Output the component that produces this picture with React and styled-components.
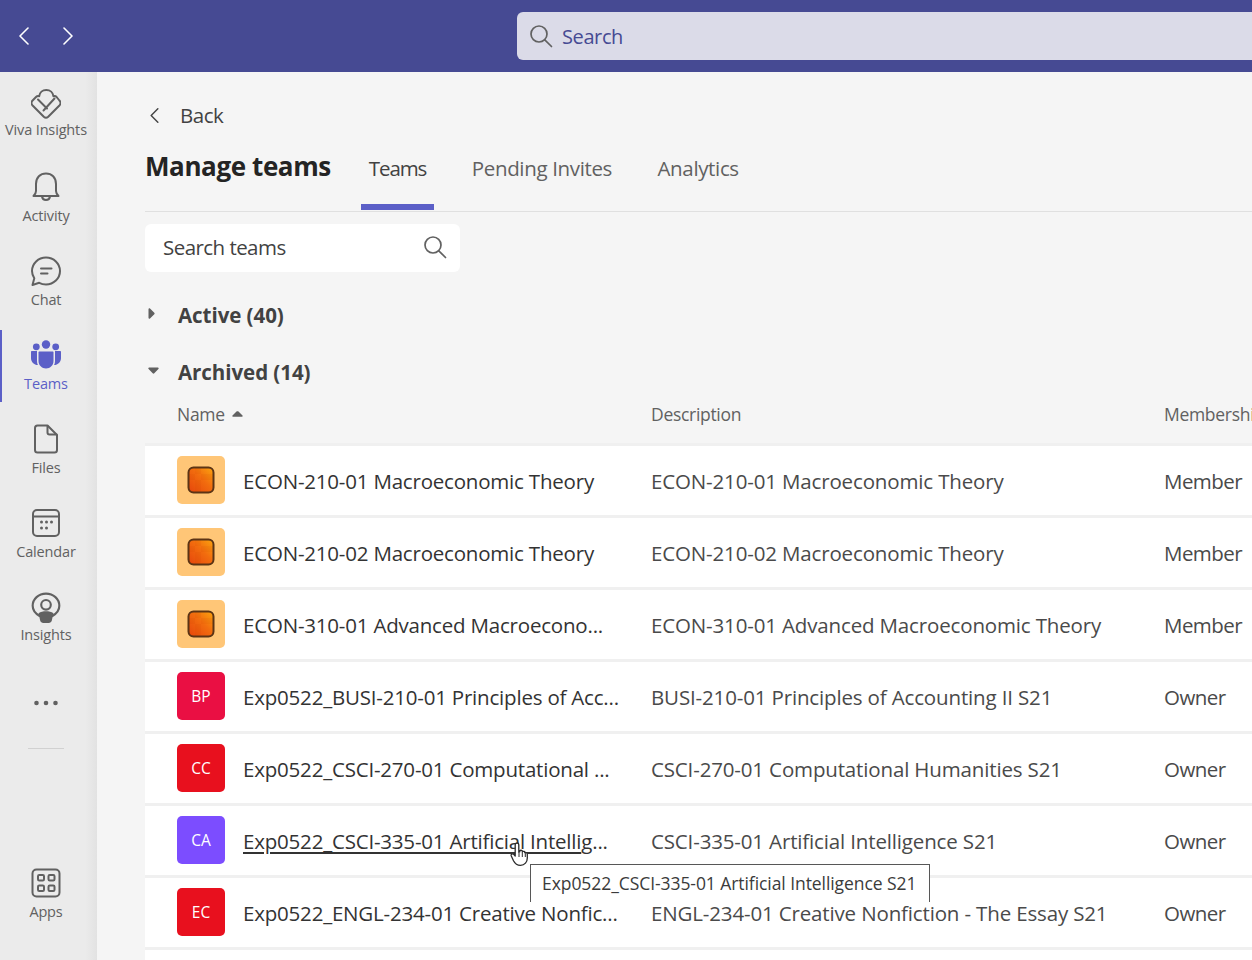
import React from "react";
import styled, { createGlobalStyle } from "styled-components";

const GlobalStyle = createGlobalStyle`
  html, body {
    margin: 0;
    padding: 0;
    height: 100%;
    overflow: hidden;
    font-family: "Open Sans", "Noto Sans", "Liberation Sans", sans-serif;
    color: #242424;
  }
  * { box-sizing: border-box; }
`;

const Page = styled.div`
  width: 100%;
  height: 960px;
  overflow: hidden;
  display: flex;
  flex-direction: column;
  background: #f5f5f5;
`;

const TopBar = styled.header`
  flex: 0 0 72px;
  background: #464a93;
  display: flex;
  align-items: center;
`;

const History = styled.div`
  flex: 0 0 517px;
  display: flex;
  gap: 34px;
  padding-left: 19px;
  color: #fff;
`;

const GlobalSearch = styled.div`
  flex: 1;
  height: 48px;
  background: #dbdbe8;
  border-radius: 6px 0 0 6px;
  display: flex;
  align-items: center;
  gap: 9px;
  padding-left: 12px;
  font-size: 20px;
  letter-spacing: -0.4px;
  color: #464a93;
`;

const Body = styled.div`
  flex: 1;
  display: flex;
  min-height: 0;
`;

const Rail = styled.nav`
  flex: 0 0 97px;
  background: linear-gradient(90deg, #ebebeb 0, #ebebeb 88%, #e2e2e2 100%);
  display: flex;
  flex-direction: column;
  padding-top: 6px;
  gap: 12px;
`;

const RailItem = styled.div`
  flex: 0 0 72px;
  display: flex;
  flex-direction: column;
  align-items: center;
  justify-content: center;
  gap: ${(p) => (p.$tight ? 1 : 4)}px;
  font-size: 14.5px;
  letter-spacing: -0.15px;
  color: ${(p) => (p.$active ? "#5b5fc7" : "#616161")};
  border-left: 2px solid ${(p) => (p.$active ? "#5b5fc7" : "transparent")};
  padding: ${(p) => (p.$tight ? 0 : 2)}px 7px 0 0;
  white-space: nowrap;
`;

const RailLabel = styled.span`
  line-height: 20px;
`;

const RailDivider = styled.div`
  flex: 0 0 1px;
  width: 36px;
  margin: -2px 0 0 28px;
  background: #d1d1d1;
`;

const RailSpacer = styled.div`
  flex: 0 0 85px;
`;

const Main = styled.main`
  flex: 1;
  min-width: 0;
  padding: 30px 0 0 48px;
  display: flex;
  flex-direction: column;
  overflow: hidden;
  & > * {
    flex: none;
  }
`;

const BackRow = styled.div`
  display: flex;
  align-items: center;
  gap: 21px;
  height: 28px;
  padding: 0 0 2px 5px;
  font-size: 20.5px;
  letter-spacing: -0.5px;
  color: #424242;
`;

const TitleRow = styled.div`
  display: flex;
  align-items: stretch;
  height: 73px;
  margin-top: 9px;
  border-bottom: 1px solid #e0e0e0;
`;

const Title = styled.h1`
  margin: 0 30px 0 0;
  padding-top: 9px;
  font-size: 26px;
  font-weight: 700;
  letter-spacing: -0.4px;
  line-height: 36px;
`;

const Tab = styled.div`
  padding: 13px 8px 0;
  margin-right: 29.5px;
  font-size: 20.5px;
  letter-spacing: ${(p) => (p.$active ? "-1.1px" : "-0.35px")};
  line-height: 32px;
  color: ${(p) => (p.$active ? "#424242" : "#616161")};
  border-bottom: 6px solid ${(p) => (p.$active ? "#5b5fc7" : "transparent")};
  margin-bottom: 1px;
`;

const TeamSearch = styled.div`
  width: 315px;
  height: 48px;
  margin-top: 12px;
  background: #fff;
  border-radius: 6px;
  display: flex;
  align-items: center;
  justify-content: space-between;
  padding: 0 13px 2px 18px;
  font-size: 20.5px;
  letter-spacing: -0.55px;
  color: #424242;
`;

const Section = styled.div`
  display: flex;
  align-items: center;
  height: 32px;
  margin-top: ${(p) => p.$top}px;
  font-size: 20.5px;
  font-weight: 700;
  letter-spacing: -0.05px;
  color: #424242;
`;

const Caret = styled.span`
  flex: 0 0 33px;
  display: flex;
  padding: 0 0 3px 3px;
  color: #616161;
`;

const Columns = styled.div`
  display: grid;
  grid-template-columns: 506px 513px 1fr;
  align-items: center;
  overflow: hidden;
`;

const HeadRow = styled(Columns)`
  height: 44px;
  margin: 4px 0 7px;
  font-size: 17.5px;
  letter-spacing: -0.3px;
  color: #616161;
`;

const HeadName = styled.div`
  padding-left: 32px;
  display: flex;
  align-items: center;
  gap: 7px;
`;

const TableRow = styled(Columns)`
  height: 72px;
  border-top: 3px solid #f0f0f0;
  background: #fff;
  font-size: 20.5px;
  letter-spacing: -0.15px;
  color: #4a4a4a;
  white-space: nowrap;
`;

const NameCell = styled.div`
  display: flex;
  align-items: center;
  gap: 18px;
  padding-left: 32px;
  letter-spacing: -0.2px;
  color: #333;
`;

const RoleCell = styled.div`
  letter-spacing: -0.55px;
`;

const Avatar = styled.div`
  flex: 0 0 48px;
  height: 48px;
  margin-bottom: 1px;
  border-radius: 5px;
  display: flex;
  align-items: center;
  justify-content: center;
  background: ${(p) => p.$color};
  color: #fff;
  font-size: 15.5px;
  letter-spacing: 0;
`;

const Hovered = styled.span`
  text-decoration: underline;
  text-decoration-thickness: 2px;
  text-underline-offset: 3px;
`;

const Tooltip = styled.div`
  position: absolute;
  left: 530px;
  top: 864px;
  width: 400px;
  height: 38px;
  background: #fff;
  border: 1px solid #575757;
  border-bottom: 0;
  padding: 7px 0 0 11px;
  font-size: 17.5px;
  letter-spacing: -0.07px;
  line-height: 22px;
  color: #3b3b3b;
  white-space: nowrap;
`;

const Pointer = styled.svg`
  position: absolute;
  left: 510px;
  top: 841px;
`;

const Icon = ({ size = 30, children, fill = "none", stroke = "currentColor", sw = 2 }) => (
  <svg width={size} height={size} viewBox="0 0 30 30" fill={fill} stroke={stroke} strokeWidth={sw} strokeLinecap="round" strokeLinejoin="round">
    {children}
  </svg>
);

const VivaIcon = () => (
  <Icon>
    <path d="M1.600 16.500c-1.400-1.500-1.400-3.600 0-5L5 8c1-1 2-1.200 3.200-.8C8.600 3.500 11.500 1 15.300 1c3.800 0 6.700 2.500 7.100 6.200 1.200-.4 2.300-.2 3.200.8l2.800 3.500c1.400 1.400 1.400 3.500 0 5L17.200 27.800c-1.300 1.200-3.100 1.200-4.400 0Z" />
    <path d="M7 10.500 16 19.500M23.500 9.500 12.500 21.500" />
  </Icon>
);

const BellIcon = () => (
  <Icon>
    <path d="M2.500 24c1.800-1.800 2.500-3 2.500-5v-7C5 5.400 9.300 1.500 15 1.500S25 5.400 25 12v7c0 2 .7 3.200 2.500 5Z" />
    <path d="M11 24.500c.3 2.200 1.800 3.400 4 3.400s3.700-1.200 4-3.400" />
  </Icon>
);

const ChatIcon = () => (
  <Icon>
    <path d="M15 1.500c7.700 0 14 6 14 13.500s-6.300 13.500-14 13.500c-2.500 0-4.800-.6-6.800-1.700L1.500 29 3.300 22.200C1.900 20.100 1 17.700 1 15 1 7.500 7.300 1.500 15 1.500Z" />
    <path d="M10 12.500h10.500M10 17.500h6.500" />
  </Icon>
);

const TeamsIcon = () => (
  <Icon fill="currentColor" stroke="none">
    <circle cx="15" cy="4.500" r="4.200" />
    <circle cx="5.300" cy="6.800" r="3.400" />
    <circle cx="24.700" cy="6.800" r="3.400" />
    <path d="M8.500 11.500h13c.6 0 1 .4 1 1v8.500c0 4.300-3.300 7.500-7.500 7.500S7.500 25.300 7.500 21v-8.500c0-.6.4-1 1-1Z" />
    <path d="M0 12c0-.6.4-1 1-1h5v10c0 1.500.3 2.900.9 4.100C3 25 0 22 0 18.300ZM30 12c0-.6-.4-1-1-1h-5v10c0 1.500-.3 2.900-.9 4.100C27 25 30 22 30 18.300Z" />
  </Icon>
);

const FileIcon = () => (
  <Icon>
    <path d="M6.500 1.500h10L26 11v15c0 1.400-1.100 2.500-2.500 2.500h-17C5.100 28.500 4 27.400 4 26V4c0-1.400 1.100-2.500 2.500-2.500Z" />
    <path d="M16.500 2v6.500c0 1.100.9 2 2 2H25.500" />
  </Icon>
);

const CalendarIcon = () => (
  <Icon>
    <rect x="2" y="2" width="26" height="26" rx="4" />
    <path d="M2.500 8.500h25" />
    <g fill="currentColor" stroke="none">
      <circle cx="10.500" cy="14" r="1.500" />
      <circle cx="15.500" cy="14" r="1.500" />
      <circle cx="20.500" cy="14" r="1.500" />
      <circle cx="10.500" cy="20" r="1.500" />
      <circle cx="15.500" cy="20" r="1.500" />
    </g>
  </Icon>
);

const BulbIcon = () => (
  <Icon size={32}>
    <path d="M9 22.500C5 20.300 2.500 17 2.500 13c0-6.500 5.600-11.500 12.500-11.500S27.500 6.500 27.500 13c0 4-2.500 7.300-6.500 9.500" />
    <circle cx="15" cy="12" r="4.500" />
    <path d="M8 20c2-1.500 4.300-2 7-2s5 .5 7 2l-1.500 6.500c-.4 1.600-1.500 2.500-3 2.500h-5c-1.500 0-2.600-.9-3-2.500Z" fill="currentColor" stroke="none" />
  </Icon>
);

const AppsIcon = () => (
  <Icon>
    <rect x="1.500" y="1.500" width="27" height="27" rx="4" />
    <rect x="7" y="7" width="6" height="5.500" rx="1.200" />
    <rect x="17.500" y="7" width="6" height="5.500" rx="1.200" />
    <rect x="7" y="17.500" width="6" height="5.500" rx="1.200" />
    <rect x="17.500" y="17.500" width="6" height="5.500" rx="1.200" />
  </Icon>
);

const MoreIcon = () => (
  <Icon>
    <g fill="currentColor" stroke="none">
      <circle cx="5.500" cy="15" r="2.300" />
      <circle cx="15" cy="15" r="2.300" />
      <circle cx="24.500" cy="15" r="2.300" />
    </g>
  </Icon>
);

const HelpIcon = () => (
  <Icon>
    <circle cx="15" cy="15" r="13.500" />
  </Icon>
);

const Chevron = ({ dir = "left", width = 10, height = 18, sw = 1.600 }) => (
  <svg width={width} height={height} viewBox="0 0 10 18" fill="none" stroke="currentColor" strokeWidth={sw} strokeLinecap="round" strokeLinejoin="round">
    <path d={dir === "left" ? "M9 1 1 9l8 8" : "M1 1l8 8-8 8"} />
  </svg>
);

const Magnifier = ({ color }) => (
  <svg width="24" height="24" viewBox="0 0 24 24" fill="none" stroke={color} strokeWidth="1.700" strokeLinecap="round">
    <circle cx="10" cy="10" r="8" />
    <path d="m15.800 15.800 6.700 6.700" />
  </svg>
);

const CaretRight = () => (
  <svg width="7" height="11" viewBox="0 0 7 11" fill="currentColor">
    <path d="M.5 1.200C.5.300 1.400 0 2 .6l4.300 4.100c.5.500.5 1.100 0 1.600L2 10.400c-.6.600-1.500.3-1.500-.6Z" />
  </svg>
);

const CaretDown = () => (
  <svg width="11" height="7" viewBox="0 0 11 7" fill="currentColor">
    <path d="M1.200.5h8.600c.9 0 1.200.9.6 1.500L6.300 6.300c-.5.500-1.100.5-1.600 0L.6 2C0 1.400.3.500 1.200.5Z" />
  </svg>
);

const SortUp = () => (
  <svg width="11" height="6" viewBox="0 0 11 6" fill="currentColor">
    <path d="M1 5.800h9c.7 0 1-.7.5-1.200L6.500.6c-.6-.5-1.400-.5-2 0L.5 4.600C0 5.100.3 5.800 1 5.800Z" />
  </svg>
);

const CourseTile = () => (
  <svg width="30" height="30" viewBox="0 0 30 30">
    <defs>
      <linearGradient id="tile" x1="0" y1="1" x2="1" y2="0">
        <stop offset="0" stopColor="#e6450c" />
        <stop offset="0.55" stopColor="#f26c0e" />
        <stop offset="1" stopColor="#fba50f" />
      </linearGradient>
    </defs>
    <rect x="2.500" y="2.500" width="25" height="25" rx="5" fill="url(#tile)" />
    <path d="M9 3v24h6V3ZM3 9h24v6H3Z" fill="#c43a00" opacity="0.08" />
    <rect x="2.500" y="2.500" width="25" height="25" rx="5" fill="none" stroke="#5c3415" strokeWidth="2" />
  </svg>
);

const railTop = [
  { label: "Viva Insights", icon: <VivaIcon />, tight: true },
  { label: "Activity", icon: <BellIcon /> },
  { label: "Chat", icon: <ChatIcon /> },
  { label: "Teams", icon: <TeamsIcon />, active: true },
  { label: "Files", icon: <FileIcon /> },
  { label: "Calendar", icon: <CalendarIcon /> },
  { label: "Insights", icon: <BulbIcon />, tight: true },
];

const teams = [
  { name: "ECON-210-01 Macroeconomic Theory", desc: "ECON-210-01 Macroeconomic Theory", role: "Member" },
  { name: "ECON-210-02 Macroeconomic Theory", desc: "ECON-210-02 Macroeconomic Theory", role: "Member" },
  { name: "ECON-310-01 Advanced Macroecono...", desc: "ECON-310-01 Advanced Macroeconomic Theory", role: "Member" },
  { name: "Exp0522_BUSI-210-01 Principles of Acc...", desc: "BUSI-210-01 Principles of Accounting II S21", role: "Owner", initials: "BP", color: "#ea0f43" },
  { name: "Exp0522_CSCI-270-01 Computational ...", desc: "CSCI-270-01 Computational Humanities S21", role: "Owner", initials: "CC", color: "#e8101e" },
  { hover: "Exp0522_CSCI-335-01 Artificial Intelli", name: "g...", desc: "CSCI-335-01 Artificial Intelligence S21", role: "Owner", initials: "CA", color: "#7c4dff" },
  { name: "Exp0522_ENGL-234-01 Creative Nonfic...", desc: "ENGL-234-01 Creative Nonfiction - The Essay S21", role: "Owner", initials: "EC", color: "#e8101e" },
];

export default function App() {
  return (
    <Page>
      <GlobalStyle />
      <TopBar>
        <History>
          <Chevron dir="left" />
          <Chevron dir="right" />
        </History>
        <GlobalSearch>
          <Magnifier color="#616161" />
          Search
        </GlobalSearch>
      </TopBar>
      <Body>
        <Rail>
          {railTop.map((item) => (
            <RailItem key={item.label} $active={item.active} $tight={item.tight}>
              {item.icon}
              <RailLabel>{item.label}</RailLabel>
            </RailItem>
          ))}
          <RailItem>
            <MoreIcon />
          </RailItem>
          <RailDivider />
          <RailSpacer />
          <RailItem>
            <AppsIcon />
            <RailLabel>Apps</RailLabel>
          </RailItem>
          <RailItem>
            <HelpIcon />
            <RailLabel />
          </RailItem>
        </Rail>
        <Main>
          <BackRow>
            <Chevron dir="left" width={9} height={15} sw={1.700} />
            Back
          </BackRow>
          <TitleRow>
            <Title>Manage teams</Title>
            <Tab $active>Teams</Tab>
            <Tab>Pending Invites</Tab>
            <Tab>Analytics</Tab>
          </TitleRow>
          <TeamSearch>
            Search teams
            <Magnifier color="#616161" />
          </TeamSearch>
          <Section $top={27}>
            <Caret>
              <CaretRight />
            </Caret>
            Active (40)
          </Section>
          <Section $top={25}>
            <Caret>
              <CaretDown />
            </Caret>
            Archived (14)
          </Section>
          <HeadRow>
            <HeadName>
              Name
              <SortUp />
            </HeadName>
            <div>Description</div>
            <div>Membership</div>
          </HeadRow>
          {teams.map((t) => (
            <TableRow key={t.desc}>
              <NameCell>
                <Avatar $color={t.color || "#ffc677"}>{t.initials || <CourseTile />}</Avatar>
                <span>
                  {t.hover && <Hovered>{t.hover}</Hovered>}
                  {t.name}
                </span>
              </NameCell>
              <div>{t.desc}</div>
              <RoleCell>{t.role}</RoleCell>
            </TableRow>
          ))}
          <TableRow />
        </Main>
      </Body>
      <Tooltip>Exp0522_CSCI-335-01 Artificial Intelligence S21</Tooltip>
      <Pointer width="20" height="26" viewBox="0 0 20 26">
        <path d="M7 2c1 0 1.800.7 1.800 1.800V11l1-.3V9.500c1.400-.6 2.400 0 2.600 1 1.200-.5 2.200 0 2.400 1 1.300-.4 2.500.3 2.500 1.800v3.700c0 4-2.600 7.300-6.800 7.300-3.500 0-5.500-1.600-7-4.600L1.300 15c-.7-1.600 1-2.800 2.400-1.700L5.200 15V3.800C5.200 2.700 6 2 7 2Z" fill="#fff" stroke="#2b2b2b" strokeWidth="1.300" strokeLinejoin="round" />
        <path d="M9 11v5M12.300 11v5M15.300 12v4" stroke="#2b2b2b" strokeWidth="1" fill="none" />
      </Pointer>
    </Page>
  );
}
